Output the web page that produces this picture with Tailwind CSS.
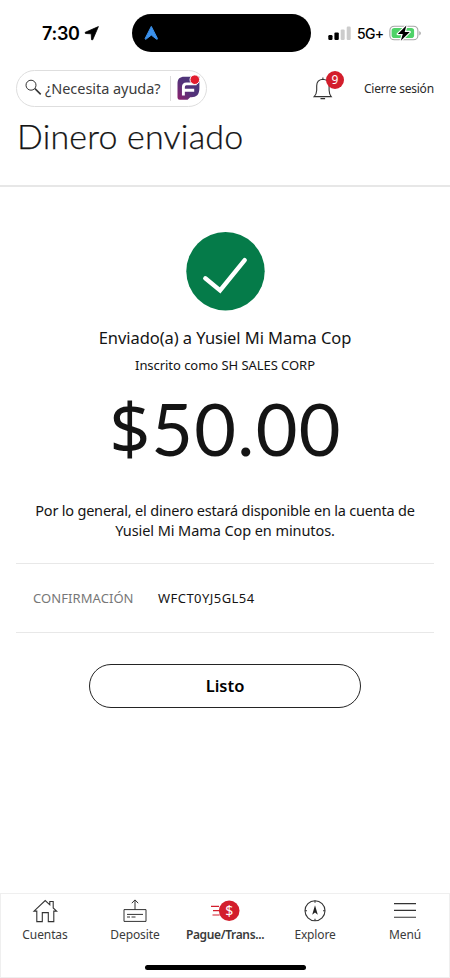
<!DOCTYPE html>
<html lang="es">
<head>
<meta charset="utf-8">
<meta name="viewport" content="width=device-width, initial-scale=1">
<title>Dinero enviado</title>
<script src="https://cdn.jsdelivr.net/npm/@tailwindcss/browser@4"></script>
</head>
<body class="bg-white">
<div class="flex h-[978px] w-[450px] flex-col overflow-hidden bg-white font-['Noto_Sans','Lato',sans-serif] whitespace-nowrap text-[#141414]">
  <!-- Status bar -->
  <div class="flex h-[69px] shrink-0 items-start pt-[14px]">
    <div class="flex h-[38px] w-[132px] items-center pl-[42px] text-black">
      <span class="w-[39px] font-['Inter',sans-serif] text-[18px] font-semibold tracking-[-0.3px]">7:30</span>
      <svg class="ml-[3px] h-[16px] w-[16px]" viewBox="0 0 16 16"><path d="M14.4 1.6 1.5 7.2c-.8.4-.6 1.2.2 1.3l5.5.3.3 5.6c.1.8.9.9 1.3.1Z" fill="#000" stroke="#000" stroke-width=".8" stroke-linejoin="round"/></svg>
    </div>
    <div class="flex h-[38px] w-[179px] items-center rounded-full bg-black pl-[12px]">
      <svg class="h-[16px] w-[15px]" viewBox="0 0 15 16"><path d="M7.3 1.4 1.2 13.4c-.3.8.3 1.1.9.7l5.2-4 5.2 4c.6.4 1.2.1.9-.7Z" fill="#3b91ec" stroke="#3b91ec" stroke-linejoin="round"/></svg>
    </div>
    <div class="flex h-[38px] items-center pl-[17px]">
      <svg class="h-[16px] w-[24px]" viewBox="0 0 24 16"><rect x=".3" y="10" width="4.2" height="5" rx="1.2"/><rect x="6.4" y="7.4" width="4.4" height="7.6" rx="1.2"/><rect x="12.7" y="4.4" width="4" height="10.6" rx="1.2" fill="#ccc"/><rect x="18.7" y="1.5" width="4" height="13.5" rx="1.2" fill="#ccc"/></svg>
      <span class="ml-[5px] w-[30px] font-['Inter',sans-serif] text-[14px] font-medium tracking-[-0.7px] text-black">5G+</span>
      <svg class="ml-[2px] h-[18px] w-[34px]" viewBox="0 0 34 18"><rect x=".9" y="2.2" width="28" height="13.6" rx="4.4" fill="#fff" stroke="#a6a6a6" stroke-width="1.1"/><rect x="2.6" y="4" width="22.5" height="10" rx="2.8" fill="#4fd268"/><path d="M30.4 7v4.4c1.8-.8 1.8-3.6 0-4.4Z" fill="#999"/><path d="M17.4 1.5 8.8 10h5l-2 6.7L20.7 8h-5Z" fill="#000" stroke="#fff" stroke-width="2.4" paint-order="stroke" stroke-linejoin="round"/></svg>
    </div>
  </div>
  <!-- Help search and session actions -->
  <header class="h-[118px] shrink-0 border-b-2 border-[#e7e7e7]">
    <div class="flex h-[38px] items-center pl-[16px]">
      <div class="flex h-[37px] w-[191px] items-center rounded-full border border-[#dedede] pl-[8px]">
        <svg class="h-[18px] w-[18px]" viewBox="0 0 18 18" fill="none" stroke="#333"><circle cx="6" cy="6.2" r="5"/><path d="m10 9.6 5.7 5.8" stroke-width="1.5"/></svg>
        <span class="ml-[2px] w-[117px] pt-[2px] text-[14.5px] tracking-[-0.05px] text-[#3b3b3b]">¿Necesita ayuda?</span>
        <span class="ml-[8px] h-[25px] w-px bg-[#ddd]"></span>
        <svg class="ml-[6px] h-[26px] w-[24px]" viewBox="0 0 24 26">
          <defs><linearGradient id="fargo" x1="1" y1="0" x2="0" y2="1"><stop stop-color="#463878"/><stop offset=".55" stop-color="#54327a"/><stop offset="1" stop-color="#8f216d"/></linearGradient></defs>
          <path d="M7.2 1.8h15.2v11.3c0 6.8-3 9.2-8 9.2h-1.2l-2.6 2.5H2.7q-2.2 0-2.2-2.2V8.6c0-4.8 2.4-6.8 6.7-6.8Z" fill="url(#fargo)"/>
          <path d="M19.5 8.9H9.4Q6.4 8.9 6.4 12v8.5M6.4 15.2h10.8" fill="none" stroke="#fff" stroke-width="2.9"/>
          <circle cx="17.8" cy="4.7" r="4.8" fill="#e21c2d" stroke="#fff" stroke-width="1"/>
        </svg>
      </div>
      <div class="relative ml-[106px] h-[38px] w-[34px]">
        <svg class="absolute top-[7px] left-0 h-[24px] w-[20px]" viewBox="0 0 20 24" fill="none" stroke="#333" stroke-width="1.1"><path d="M1.2 20.6q2.3-2.2 2.5-6.4V9.8q0-6 6.2-6.6 6.2.6 6.2 6.6v4.4q.2 4.2 2.1 6.4ZM9.9 3.2V1.4M7.5 22.6h4.6"/></svg>
        <span class="absolute top-[2px] left-[13px] flex h-[18px] w-[18px] items-center justify-center rounded-full bg-[#d31e2c] text-[12px] text-white">9</span>
      </div>
      <span class="ml-[17px] pt-[2px] text-[12px] tracking-[-0.25px] text-[#292929]">Cierre sesión</span>
    </div>
    <h1 class="pt-[7px] pl-[17px] font-['Lato',sans-serif] text-[34px] leading-[44px] font-light tracking-[0.2px] [-webkit-text-stroke:0.25px_#141414]">Dinero enviado</h1>
  </header>
  <!-- Transfer result -->
  <main class="flex flex-1 flex-col items-center pt-[45px]">
    <svg class="h-[79px] w-[79px]" viewBox="0 0 79 79"><circle cx="39.5" cy="39.3" r="39.2" fill="#057b49"/><path d="m19.3 46.3 14.8 12.1 24.6-30.2" fill="none" stroke="#fff" stroke-width="4.4" stroke-linecap="round"/></svg>
    <p class="mt-[15px] text-[16.5px] leading-[24px] tracking-[-0.07px]">Enviado(a) a Yusiel Mi Mama Cop</p>
    <p class="mt-[5px] text-[13px] leading-[20px] tracking-[-0.05px]">Inscrito como SH SALES CORP</p>
    <p class="mt-[8px] flex h-[90px] items-center pl-[1px] text-[72px] leading-[90px]"><span class="w-[42px] pr-[1px] -mt-[3px]">$</span><span class="font-['Lato',sans-serif] tracking-[1.3px]">50.00</span></p>
    <p class="mt-[27px] text-center text-[14.5px] leading-[20px] tracking-[-0.2px]">Por lo general, el dinero estará disponible en la cuenta de<br><span class="tracking-[-0.08px]">Yusiel Mi Mama Cop en minutos.</span></p>
    <dl class="mt-[23px] flex h-[70px] w-[418px] items-center border-y border-[#e8e8e8] pt-[2px] pl-[17px] text-[13px]">
      <dt class="w-[125px] tracking-[0.07px] text-[#777]">CONFIRMACIÓN</dt>
      <dd class="tracking-[0.45px]">WFCT0YJ5GL54</dd>
    </dl>
    <button class="mt-[31px] h-[44px] w-[272px] rounded-full border border-[#242424] pt-[1px] text-[16.5px] font-semibold text-black">Listo</button>
  </main>
  <!-- Bottom navigation -->
  <nav class="flex h-[85px] shrink-0 flex-col items-center border border-[#efefef] text-[12px] text-[#3b3b3b]">
    <div class="grid h-[71px] w-[450px] grid-cols-5 pt-[5px]">
      <div class="flex flex-col items-center"><svg class="h-[25px] w-[26px]" viewBox="0 0 26 25" fill="none" stroke="#333" stroke-width="1.1"><path d="M4.8 12.1H2L13.2 1.5l4.6 4.3V2.5h3.4V9l3.4 3.1h-2.8v10.5h-5.5v-9h-6v9H4.8Z"/></svg><span class="mt-[2px] leading-[18px] tracking-[-0.1px]">Cuentas</span></div>
      <div class="flex flex-col items-center"><svg class="h-[25px] w-[26px]" viewBox="0 0 26 25" fill="none" stroke="#333"><path d="M2 10.6h22v11.8H2ZM13 10.6V1M9.8 4.2 13 .9l3.2 3.3M5 15.4h16M5 18h3m1.5 0h4"/></svg><span class="mt-[2px] leading-[18px] tracking-[-0.1px]">Deposite</span></div>
      <div class="flex flex-col items-center"><svg class="h-[25px] w-[32px]" viewBox="0 0 32 25"><path d="M2 7.4h8M4 11.7h6M3.5 16h7" stroke="#d31e2c" stroke-width="1.2"/><circle cx="20.2" cy="11.7" r="10.3" fill="#d31e2c"/><text x="20.2" y="16.7" text-anchor="middle" font-family="Noto Sans, sans-serif" font-size="14" fill="#fff">$</text></svg><span class="mt-[2px] leading-[18px] font-semibold tracking-[-0.35px]">Pague/Trans...</span></div>
      <div class="flex flex-col items-center"><svg class="h-[25px] w-[26px]" viewBox="0 0 26 25" fill="none" stroke="#333" stroke-width="1.1"><circle cx="13" cy="11.7" r="10"/><path d="M13 1.7v2M13 19.7v2M3 11.7h2M21 11.7h2"/><path d="m13 6.2 2.8 9.6-2.8-2.2-2.8 2.2Z" fill="#222" stroke="none"/></svg><span class="mt-[2px] leading-[18px] tracking-[-0.15px]">Explore</span></div>
      <div class="flex flex-col items-center"><svg class="h-[25px] w-[26px]" viewBox="0 0 26 25" stroke="#333" stroke-width="1.1"><path d="M2 4.6h22M2 11.4h22M2 18.2h22"/></svg><span class="mt-[2px] leading-[18px] tracking-[-0.15px]">Menú</span></div>
    </div>
    <div class="h-[5px] w-[161px] shrink-0 rounded-full bg-black"></div>
  </nav>
</div>
</body>
</html>
